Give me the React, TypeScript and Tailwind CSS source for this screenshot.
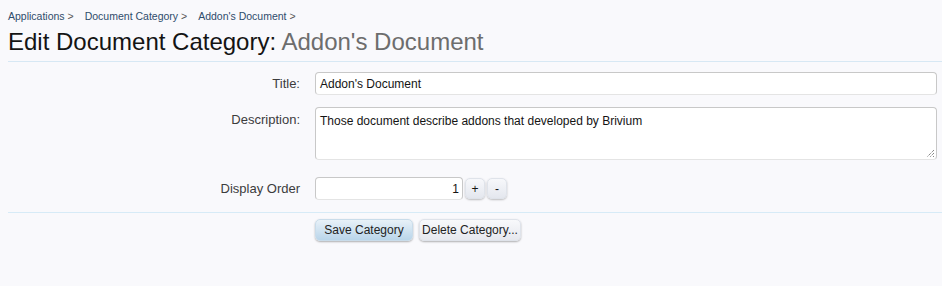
import React from "react";

const crumbs = ["Applications", "Document Category", "Addon's Document"];

function Row({ label, children, top = false }: { label: string; children: React.ReactNode; top?: boolean }) {
  return (
    <div className={`flex ${top ? "items-start" : "items-center"}`}>
      <div className={`w-[300px] shrink-0 text-right text-[13px] text-[#3c3c3c] ${top ? "pt-[3px]" : ""}`}>{label}</div>
      <div className="ml-[15px] flex-1 pr-[5px]">{children}</div>
    </div>
  );
}

export default function App() {
  return (
    <div className="min-h-[286px] w-[942px] bg-[#f9f9fc] font-['Liberation_Sans',Arial,sans-serif] text-[#141414]">
      <div className="pl-[8px] pt-[9px]">
        {/* breadcrumb */}
        <div className="flex gap-[11px] text-[10.5px] leading-[14px] text-[#2f4c6b]">
          {crumbs.map((c) => (
            <span key={c}>
              {c} <span className="text-[#555]">&gt;</span>
            </span>
          ))}
        </div>
        <h1 className="mt-[4px] text-[24px] leading-[30px] text-[#141414]">
          Edit Document Category: <span className="text-[#6d6d6d]">Addon's Document</span>
        </h1>
        <div className="mt-[4px] h-px bg-[#d7e8f4]" />
      </div>

      <div className="flex flex-col gap-[12px] pt-[10px]">
        <Row label="Title:">
          <div className="flex h-[23px] items-center rounded-[4px] border border-[#c8c8c8] border-b-[#e4e4e4] bg-white px-[4px] text-[12px]">
            Addon's Document
          </div>
        </Row>
        <Row label="Description:" top>
          <div className="relative h-[53px] rounded-[4px] border border-[#c8c8c8] border-b-[#e4e4e4] bg-white px-[4px] pt-[4px] text-[12px]">
            Those document describe addons that developed by Brivium
            <svg className="absolute bottom-[1px] right-[1px]" width="9" height="9" viewBox="0 0 9 9">
              <path d="M8 1L1 8M8 4L4 8M8 7L7 8" stroke="#555" strokeWidth="1" strokeDasharray="1 1" />
            </svg>
          </div>
        </Row>
        <div className="mt-[5px]">
          <Row label="Display Order">
            <div className="flex items-center gap-[2px]">
              <div className="flex h-[23px] w-[148px] items-center justify-end rounded-[4px] border border-[#c8c8c8] border-b-[#e4e4e4] bg-white px-[3px] text-[12px]">
                1
              </div>
              <button className="h-[21px] w-[20px] rounded-[5px] border border-[#dfe3ea] bg-gradient-to-b from-[#f7f8fb] to-[#e4e7ee] text-[12px] leading-none shadow-[0_1px_2px_rgba(0,0,0,0.25)]">
                +
              </button>
              <button className="h-[21px] w-[20px] rounded-[5px] border border-[#dfe3ea] bg-gradient-to-b from-[#f7f8fb] to-[#e4e7ee] text-[12px] leading-none shadow-[0_1px_2px_rgba(0,0,0,0.25)]">
                -
              </button>
            </div>
          </Row>
        </div>
      </div>

      <div className="ml-[8px] mt-[12px] h-px bg-[#d7ebf7]" />

      <div className="flex gap-[6px] pl-[315px] pt-[6px]">
        <button className="h-[22px] w-[98px] rounded-[5px] border border-[#c9dcea] bg-gradient-to-b from-[#e8f1f8] to-[#b9d5ea] text-[12px] text-[#222] shadow-[0_1px_2px_rgba(0,0,0,0.3)]">
          Save Category
        </button>
        <button className="h-[22px] w-[102px] rounded-[5px] border border-[#dfe3ea] bg-gradient-to-b from-[#f8f9fb] to-[#e6e8ee] text-[12px] text-[#222] shadow-[0_1px_2px_rgba(0,0,0,0.3)]">
          Delete Category...
        </button>
      </div>
    </div>
  );
}
